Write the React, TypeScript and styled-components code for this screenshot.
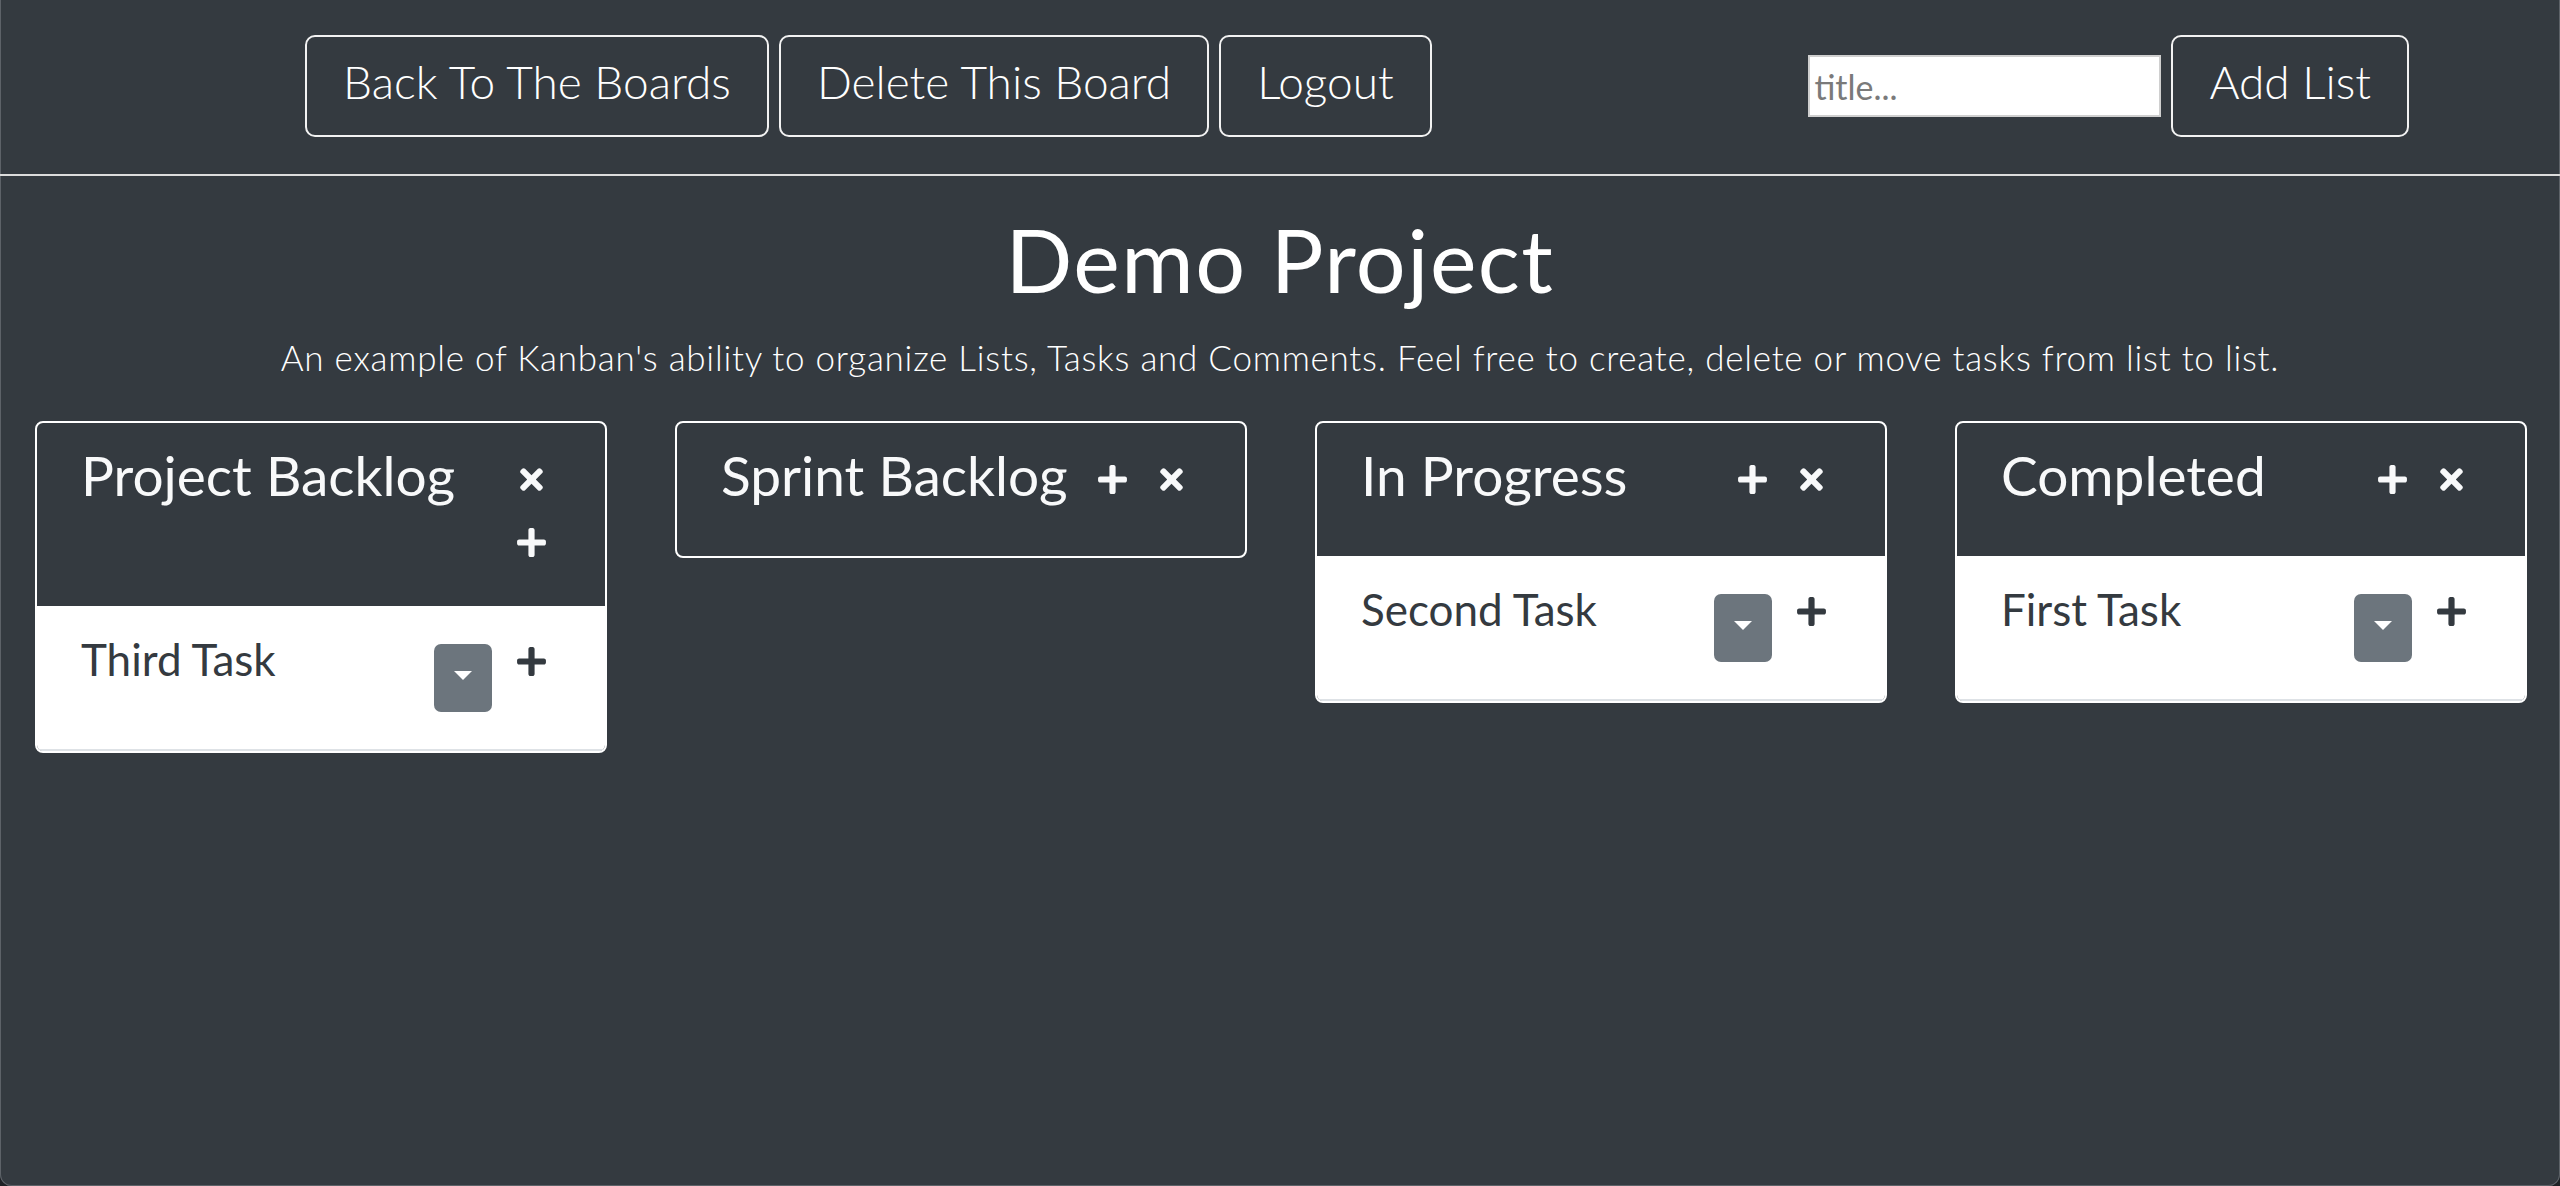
import styled, { createGlobalStyle } from 'styled-components';
import { FaPlus, FaTimes } from 'react-icons/fa';

type Task = { id: number; title: string };
type List = { id: number; name: string; tasks: Task[] };

const lists: List[] = [
  { id: 1, name: 'Project Backlog', tasks: [{ id: 3, title: 'Third Task' }] },
  { id: 2, name: 'Sprint Backlog', tasks: [] },
  { id: 3, name: 'In Progress', tasks: [{ id: 2, title: 'Second Task' }] },
  { id: 4, name: 'Completed', tasks: [{ id: 1, title: 'First Task' }] },
];

const GlobalStyle = createGlobalStyle`
  html, body {
    margin: 0;
    padding: 0;
    background: #1f2226;
  }
  body {
    font-family: Lato, "Noto Sans", sans-serif;
  }
  * {
    box-sizing: border-box;
  }
`;

const Frame = styled.div`
  min-height: 100vh;
  background: #343a40;
  color: #fff;
  border-radius: 0 0 12px 12px;
  box-shadow: inset 1px 0 0 #5d6268, inset -1px 0 0 #5d6268, inset 0 -1px 0 #5d6268;
`;

const TopBar = styled.nav`
  display: flex;
  justify-content: space-between;
  align-items: center;
  padding: 35px 151px 37px 305px;
  border-bottom: 2px solid #dcdcdc;
`;

const ButtonGroup = styled.div`
  display: flex;
  align-items: center;
  gap: 10px;
`;

const OutlineButton = styled.button`
  height: 102px;
  padding: 0 36px 9px;
  display: inline-flex;
  align-items: center;
  font-family: Lato, sans-serif;
  font-size: 46px;
  font-weight: 300;
  color: #fff;
  background: transparent;
  border: 2px solid #f2f2f2;
  border-radius: 10px;
  cursor: pointer;
`;

const TitleInput = styled.input`
  width: 353px;
  height: 62px;
  padding: 0 4px;
  font-family: Lato, sans-serif;
  font-size: 34px;
  font-weight: 400;
  color: #333;
  background: #fff;
  border: 2px solid #cfcfcf;
  outline: none;

  &::placeholder {
    color: #7a7a7a;
  }
`;

const BoardTitle = styled.h1`
  margin: 31px 0 0;
  text-align: center;
  font-size: 88px;
  font-weight: 400;
  letter-spacing: 1.5px;
  line-height: 1.2;
`;

const BoardSubtitle = styled.p`
  margin: 23px 0 0;
  text-align: center;
  font-size: 35px;
  font-weight: 300;
  letter-spacing: 0.75px;
  line-height: 1.2;
`;

const Lists = styled.div`
  display: grid;
  grid-template-columns: repeat(4, 1fr);
  align-items: start;
  margin-top: 43px;
`;

const ListColumn = styled.div`
  padding: 0 33px 0 35px;
`;

const ListCard = styled.section`
  border: 2px solid #fff;
  border-radius: 8px;
  overflow: hidden;
  background: #343a40;
`;

const ListHeader = styled.header`
  display: flex;
  justify-content: space-between;
  align-items: flex-start;
  padding: 0 44px 31.5px;
`;

const ListName = styled.h2`
  margin: 0;
  padding-top: 4px;
  flex-shrink: 0;
  white-space: nowrap;
  font-size: 55px;
  font-weight: 400;
  line-height: 97.5px;
  color: #f8f9fa;
`;

const HeaderIcons = styled.div`
  display: flex;
  flex-direction: row-reverse;
  flex-wrap: wrap;
  flex: 0 1 118px;
  min-width: 59px;
  padding-top: 25.5px;
`;

const IconButton = styled.button<{ $dark?: boolean; $tall?: boolean }>`
  width: 59px;
  height: ${p => (p.$tall ? '76px' : '63px')};
  padding: 0;
  display: flex;
  align-items: center;
  justify-content: center;
  background: none;
  border: 0;
  color: ${p => (p.$dark ? '#343a40' : '#f8f9fa')};
  cursor: pointer;

  svg {
    width: 33px;
    height: 33px;
  }
`;

const TaskItem = styled.div`
  display: flex;
  align-items: flex-start;
  padding: 18px 44px 37px;
  background: #fff;
  border-bottom: 2px solid #dee2e6;
`;

const TaskName = styled.span`
  flex: 1;
  padding-top: 2px;
  font-size: 44px;
  line-height: 66px;
  color: #343a40;
`;

const DropdownToggle = styled.button`
  width: 58px;
  height: 68px;
  margin: 20px 10px 0 0;
  padding: 0;
  display: flex;
  align-items: center;
  justify-content: center;
  background: #6c757d;
  border: 0;
  border-radius: 7px;
  cursor: pointer;

  &::after {
    content: '';
    margin-top: -5px;
    border-top: 9px solid #fff;
    border-left: 9px solid transparent;
    border-right: 9px solid transparent;
  }
`;

function ListPanel({ list }: { list: List }) {
  return (
    <ListCard>
      <ListHeader>
        <ListName>{list.name}</ListName>
        <HeaderIcons>
          <IconButton aria-label="delete list"><FaTimes /></IconButton>
          <IconButton aria-label="add task"><FaPlus /></IconButton>
        </HeaderIcons>
      </ListHeader>
      {list.tasks.map(task => (
        <TaskItem key={task.id}>
          <TaskName>{task.title}</TaskName>
          <DropdownToggle aria-label="move task" />
          <IconButton $dark $tall aria-label="add comment"><FaPlus /></IconButton>
        </TaskItem>
      ))}
    </ListCard>
  );
}

export default function App() {
  return (
    <>
      <GlobalStyle />
      <Frame>
        <TopBar>
          <ButtonGroup>
            <OutlineButton>Back To The Boards</OutlineButton>
            <OutlineButton>Delete This Board</OutlineButton>
            <OutlineButton>Logout</OutlineButton>
          </ButtonGroup>
          <ButtonGroup>
            <TitleInput placeholder="title..." />
            <OutlineButton>Add List</OutlineButton>
          </ButtonGroup>
        </TopBar>
        <main>
          <BoardTitle>Demo Project</BoardTitle>
          <BoardSubtitle>
            An example of Kanban's ability to organize Lists, Tasks and Comments. Feel free to create, delete or move tasks from list to list.
          </BoardSubtitle>
          <Lists>
            {lists.map(list => (
              <ListColumn key={list.id}>
                <ListPanel list={list} />
              </ListColumn>
            ))}
          </Lists>
        </main>
      </Frame>
    </>
  );
}
